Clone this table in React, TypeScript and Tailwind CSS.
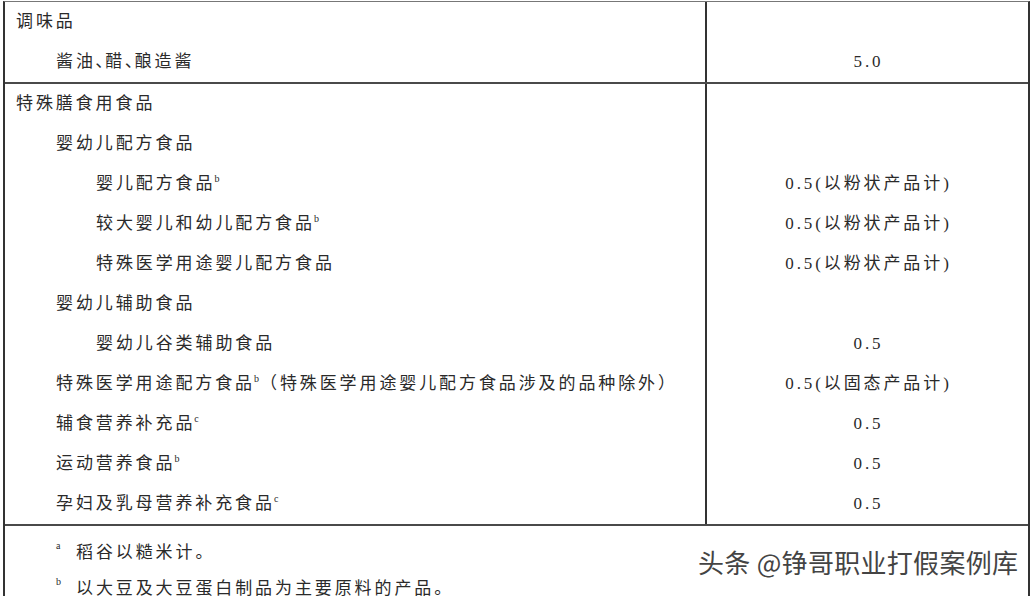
import React from "react";

type Row = { text: string; sup?: string; rest?: string; level: number; value?: string };

const sec1: Row[] = [
  { text: "调味品", level: 0 },
  { text: "酱油、醋、酿造酱", level: 1, value: "5.0" },
];

const sec2: Row[] = [
  { text: "特殊膳食用食品", level: 0 },
  { text: "婴幼儿配方食品", level: 1 },
  { text: "婴儿配方食品", sup: "b", level: 2, value: "0.5(以粉状产品计)" },
  { text: "较大婴儿和幼儿配方食品", sup: "b", level: 2, value: "0.5(以粉状产品计)" },
  { text: "特殊医学用途婴儿配方食品", level: 2, value: "0.5(以粉状产品计)" },
  { text: "婴幼儿辅助食品", level: 1 },
  { text: "婴幼儿谷类辅助食品", level: 2, value: "0.5" },
  { text: "特殊医学用途配方食品", sup: "b", rest: "（特殊医学用途婴儿配方食品涉及的品种除外）", level: 1, value: "0.5(以固态产品计)" },
  { text: "辅食营养补充品", sup: "c", level: 1, value: "0.5" },
  { text: "运动营养食品", sup: "b", level: 1, value: "0.5" },
  { text: "孕妇及乳母营养补充食品", sup: "c", level: 1, value: "0.5" },
];

const padByLevel = ["pl-[11px]", "pl-[51px]", "pl-[91px]"];

function renderText(t: string) {
  const parts = t.split("、");
  return parts.map((p, i) => (
    <React.Fragment key={i}>
      {p}
      {i < parts.length - 1 && <span className="tracking-[1px]">､</span>}
    </React.Fragment>
  ));
}

function Section({ rows }: { rows: Row[] }) {
  return (
    <div className="flex border-b-2 border-[#4a4a4a]">
      <div className="w-[700px] flex flex-col">
        {rows.map((r, i) => (
          <div key={i} className={`h-10 flex items-center ${padByLevel[r.level]}`}>
            <span className="whitespace-nowrap">
              {renderText(r.text)}
              {r.sup && (
                <span className="inline-block text-[10px] tracking-normal relative top-[-7px] mr-[1px] ml-[-1px]">{r.sup}</span>
              )}
              {r.rest}
            </span>
          </div>
        ))}
      </div>
      <div className="flex-1 flex flex-col border-l-2 border-[#333]">
        {rows.map((r, i) => (
          <div key={i} className="h-10 flex items-center justify-center pl-[2px]">
            <span className="whitespace-nowrap">{r.value ?? ""}</span>
          </div>
        ))}
      </div>
    </div>
  );
}

export default function App() {
  return (
    <div
      className="w-[1035px] h-[596px] overflow-hidden bg-white text-[#2a2a2a] text-[17px] tracking-[2.9px] pt-[1px] pl-[3px]"
      style={{ fontFamily: '"Liberation Serif", "Noto Sans CJK SC", serif' }}
    >
      <div className="w-[1027px] border-l-2 border-r-2 border-t border-[#333] border-t-[#777] relative">
        <Section rows={sec1} />
        <Section rows={sec2} />
        <div className="h-[80px] pl-[51px] pt-[14px] flex flex-col gap-[10px]">
          <div className="flex items-start whitespace-nowrap">
            <span className="text-[10px] w-[20px] tracking-normal mt-[-2px]">a</span>
            <span>稻谷以糙米计。</span>
          </div>
          <div className="flex items-start whitespace-nowrap">
            <span className="text-[10px] w-[20px] tracking-normal mt-[-2px]">b</span>
            <span>以大豆及大豆蛋白制品为主要原料的产品。</span>
          </div>
        </div>
        <div
          className="absolute left-[693px] top-[547px] text-[26px] tracking-[0.3px] text-[#444] whitespace-nowrap leading-none"
          style={{ fontFamily: '"Noto Sans CJK SC", sans-serif', textShadow: "1px 1px 0 #fff, -1px -1px 0 #fff, 1px -1px 0 #fff, -1px 1px 0 #fff" }}
        >
          头条 @铮哥职业打假案例库
        </div>
      </div>
    </div>
  );
}
